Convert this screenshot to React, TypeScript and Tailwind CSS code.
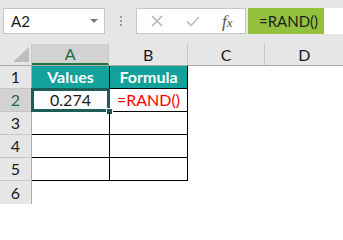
import React from 'react';

const rows = [
    { n: 1, a: 'Values', b: 'Formula', head: true },
    { n: 2, a: '0.274', b: '=RAND()', active: true },
    { n: 3, a: '', b: '' },
    { n: 4, a: '', b: '' },
    { n: 5, a: '', b: '' },
];

const FONT = { fontFamily: 'Lato, "Open Sans", sans-serif' };

export default function App() {
    return (
        <div className="w-[343px] h-[204px] overflow-hidden bg-white text-[#1a1a1a]" style={FONT}>
            {/* Formula bar */}
            <div className="h-[44px] bg-[#e6e6e6] flex items-start pt-[8px] pl-[3px]">
                <div className="w-[102px] h-[26px] bg-white border border-[#c6c6c6] flex items-center justify-between pl-[7px] pr-[6px]">
                    <span className="text-[15px]">A2</span>
                    <span className="w-0 h-0 border-l-[4px] border-r-[4px] border-t-[4px] border-l-transparent border-r-transparent border-t-[#7a7a7a]" />
                </div>
                <div className="w-[31px] h-[26px] flex flex-col items-center justify-center gap-[2px]">
                    <span className="w-[2px] h-[2px] bg-[#9a9a9a]" />
                    <span className="w-[2px] h-[2px] bg-[#9a9a9a]" />
                    <span className="w-[2px] h-[2px] bg-[#9a9a9a]" />
                </div>
                <div className="w-[110px] h-[26px] bg-white border border-[#c6c6c6] flex items-center">
                    <svg width="12" height="12" viewBox="0 0 12 12" className="ml-[14px]">
                        <path d="M1 1 L11 11 M11 1 L1 11" stroke="#b5b5b5" strokeWidth="1.6" />
                    </svg>
                    <svg width="14" height="11" viewBox="0 0 14 11" className="ml-[23px]">
                        <path d="M1 5.5 L5 9.5 L13 1" stroke="#c4c4c4" strokeWidth="1.8" fill="none" />
                    </svg>
                    <span className="ml-[22px] text-[17px] italic text-[#555] leading-none" style={{ fontFamily: '"Liberation Serif", serif' }}>
                        f<span className="text-[13px]">x</span>
                    </span>
                </div>
                <div className="flex-1 h-[26px] ml-[2px] bg-white flex items-stretch">
                    <div className="w-[76px] bg-[#93c13e] flex items-center pl-[11px] text-[15px] text-[#1e1e1e]">=RAND()</div>
                </div>
            </div>

            {/* Column headers */}
            <div className="h-[22px] flex bg-[#e6e6e6] border-b border-[#ababab] text-[16px]">
                <div className="w-[32px] border-r border-[#c6c6c6] flex items-end justify-end pr-[2px] pb-[3px]">
                    <svg width="16" height="15" viewBox="0 0 16 15">
                        <path d="M16 0 L16 15 L0 15 Z" fill="#bdbdbd" />
                    </svg>
                </div>
                <div className="w-[78px] bg-[#d2d2d2] border-r border-[#c6c6c6] border-b-2 border-b-[#217346] flex items-center justify-center text-[#1e6b43]">A</div>
                <div className="w-[79px] border-r border-[#c6c6c6] flex items-center justify-center">B</div>
                <div className="w-[78px] border-r border-[#c6c6c6] flex items-center justify-center">C</div>
                <div className="w-[78px] flex items-center justify-center">D</div>
            </div>

            {/* Rows */}
            {rows.map((r) => (
                <div key={r.n} className="h-[23px] flex text-[16px]">
                    <div
                        className={`w-[32px] border-r border-b flex items-center justify-center ${
                            r.active
                                ? 'bg-[#d2d2d2] border-r-[#217346] border-b-[#c6c6c6] text-[#1e6b43]'
                                : 'bg-[#e6e6e6] border-r-[#ababab] border-b-[#c6c6c6]'
                        }`}
                    >
                        {r.n}
                    </div>
                    <div
                        className={`relative w-[78px] border-r border-b border-black flex items-center justify-center ${
                            r.head ? 'bg-[#12a19b] text-white font-bold' : ''
                        }`}
                    >
                        {r.a}
                        {r.active && (
                            <>
                                <span className="absolute -left-[1px] -top-[1px] -right-[1px] -bottom-[1px] border-[3px] border-[#1f5c57]" />
                                <span className="absolute -right-[4px] -bottom-[4px] w-[7px] h-[7px] bg-[#1f5c57] border border-white" />
                            </>
                        )}
                    </div>
                    <div
                        className={`w-[78px] border-r border-b border-black flex items-center justify-center ${
                            r.head ? 'bg-[#12a19b] text-white font-bold' : ''
                        } ${r.active ? 'text-[#ff0000]' : ''}`}
                    >
                        {r.b}
                    </div>
                    <div className="flex-1" />
                </div>
            ))}
            <div className="h-[23px] flex text-[16px]">
                <div className="w-[32px] h-[23px] bg-[#e6e6e6] border-r border-[#ababab] flex items-center justify-center">6</div>
            </div>
        </div>
    );
}
